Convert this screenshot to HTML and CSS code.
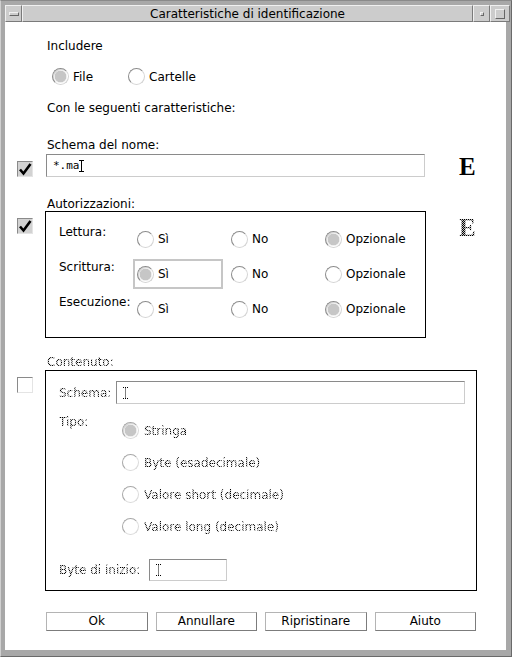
FILE: index.html
```html
<!DOCTYPE html>
<html>
<head>
<meta charset="utf-8">
<link rel="stylesheet" href="styles.css">
</head>
<body>
<div class="win">
  <div class="titlebar">
    <div class="tb-btn tb-menu"><span class="menu-bar"></span></div>
    <div class="tb-title">Caratteristiche di identificazione</div>
    <div class="tb-btn tb-min"><span class="min-sq"></span></div>
    <div class="tb-btn tb-max"><span class="max-sq"></span></div>
  </div>
  <div class="client">
    <div class="main-col">
      <div class="lbl l-includere">Includere</div>
      <div class="top-radios">
        <label class="opt"><span class="radio on"></span><span class="otext">File</span></label>
        <label class="opt opt-cartelle"><span class="radio"></span><span class="otext">Cartelle</span></label>
      </div>
      <div class="lbl l-con">Con le seguenti caratteristiche:</div>
      <div class="lbl l-schema">Schema del nome:</div>
    </div>

    <div class="row row-name">
      <div class="gut"><span class="cb checked"><svg viewBox="0 0 14 14" width="14" height="14"><path d="M2 7.5 L5.5 11.5 L12.5 2" fill="none" stroke="#000" stroke-width="2.6"/></svg></span></div>
      <div class="field f-name"><span class="ftext">*.ma</span><svg class="ibeam" viewBox="0 0 5 12" width="5" height="12"><path d="M0 0.5H5M2.5 0.5V11.5M0 11.5H5" stroke="#000" stroke-width="1" fill="none"/></svg></div>
      <div class="bigE">E</div>
    </div>

    <div class="main-col">
      <div class="lbl l-aut">Autorizzazioni:</div>
    </div>

    <div class="row row-aut">
      <div class="gut"><span class="cb checked"><svg viewBox="0 0 14 14" width="14" height="14"><path d="M2 7.5 L5.5 11.5 L12.5 2" fill="none" stroke="#000" stroke-width="2.6"/></svg></span></div>
      <div class="box box-aut">
        <div class="lbl plabel">Lettura:</div>
        <div class="cell"><span class="radio"></span><span class="otext">Sì</span></div>
        <div class="cell"><span class="radio"></span><span class="otext">No</span></div>
        <div class="cell"><span class="radio on"></span><span class="otext">Opzionale</span></div>

        <div class="lbl plabel">Scrittura:</div>
        <div class="cell focus"><span class="radio on"></span><span class="otext">Sì</span></div>
        <div class="cell"><span class="radio"></span><span class="otext">No</span></div>
        <div class="cell"><span class="radio"></span><span class="otext">Opzionale</span></div>

        <div class="lbl plabel">Esecuzione:</div>
        <div class="cell"><span class="radio"></span><span class="otext">Sì</span></div>
        <div class="cell"><span class="radio"></span><span class="otext">No</span></div>
        <div class="cell"><span class="radio on"></span><span class="otext">Opzionale</span></div>
      </div>
      <div class="bigE bigE-dis">E</div>
    </div>

    <div class="main-col">
      <div class="lbl l-cont dis">Contenuto:</div>
    </div>

    <div class="row row-cont">
      <div class="gut"><span class="cb"></span></div>
      <div class="box box-cont">
        <div class="crow">
          <div class="lbl dis c-schema">Schema:</div>
          <div class="field f-cschema"><svg class="ibeam" viewBox="0 0 5 12" width="5" height="12"><path d="M0 0.5H5M2.5 0.5V11.5M0 11.5H5" stroke="#000" stroke-width="1" stroke-dasharray="1 1" fill="none"/></svg></div>
        </div>
        <div class="tipo">
          <div class="lbl dis c-tipo">Tipo:</div>
          <div class="tipo-list">
            <div class="topt"><span class="radio on dis-radio"></span><span class="otext dis">Stringa</span></div>
            <div class="topt"><span class="radio dis-radio"></span><span class="otext dis">Byte (esadecimale)</span></div>
            <div class="topt"><span class="radio dis-radio"></span><span class="otext dis">Valore short (decimale)</span></div>
            <div class="topt"><span class="radio dis-radio"></span><span class="otext dis">Valore long (decimale)</span></div>
          </div>
        </div>
        <div class="crow crow-byte">
          <div class="lbl dis c-byte">Byte di inizio:</div>
          <div class="field f-byte"><svg class="ibeam" viewBox="0 0 5 12" width="5" height="12"><path d="M0 0.5H5M2.5 0.5V11.5M0 11.5H5" stroke="#000" stroke-width="1" stroke-dasharray="1 1" fill="none"/></svg></div>
        </div>
      </div>
    </div>

    <div class="buttons">
      <div class="btn">Ok</div>
      <div class="btn">Annullare</div>
      <div class="btn">Ripristinare</div>
      <div class="btn">Aiuto</div>
    </div>
  </div>
</div>
</body>
</html>
```

FILE: styles.css
```css
* { box-sizing: border-box; }
html, body { margin: 0; padding: 0; background: #a8a8a8; }
body {
  font-family: "DejaVu Sans", sans-serif;
  font-size: 12px;
  color: #000;
}
.win {
  width: 512px;
  height: 657px;
  background: #a8a8a8;
  border-top: 1px solid #8a8a8a;
  border-left: 1px solid #d0d0d0;
  border-right: 1px solid #6a6a6a;
  border-bottom: 1px solid #6a6a6a;
  padding: 4px 1px 6px 4px;
  display: flex;
  flex-direction: column;
}
.titlebar {
  height: 17px;
  display: flex;
  background: #cccccc;
  flex: none;
}
.tb-btn {
  flex: none;
  width: 17px;
  height: 17px;
  border: 1px solid;
  border-color: #f0f0f0 #7a7a7a #7a7a7a #f0f0f0;
  display: flex;
  align-items: center;
  justify-content: center;
  background: #cccccc;
}
.tb-max { width: 20px; }
.menu-bar {
  width: 10px; height: 4px;
  border: 1px solid;
  border-color: #f0f0f0 #666 #666 #f0f0f0;
}
.min-sq {
  width: 4px; height: 4px;
  border: 1px solid;
  border-color: #f0f0f0 #666 #666 #f0f0f0;
}
.max-sq {
  width: 10px; height: 10px;
  border: 1px solid;
  border-color: #f0f0f0 #666 #666 #f0f0f0;
}
.tb-title {
  flex: 1;
  text-align: center;
  line-height: 16px;
  border: 1px solid;
  border-color: #f0f0f0 #7a7a7a #7a7a7a #f0f0f0;
  font-size: 12px;
}
.client {
  flex: 1;
  background: #fff;
  margin-right: 4px;
  display: flex;
  flex-direction: column;
  position: relative;
}
.main-col { padding-left: 42px; display: flex; flex-direction: column; }
.lbl { line-height: 14px; white-space: nowrap; }
.l-includere { margin-top: 17px; }
.top-radios { display: flex; margin-top: 15px; height: 17px; margin-left: 5px; }
.opt { display: flex; align-items: center; }
.opt-cartelle { margin-left: 35px; }
.otext { margin-left: 4px; line-height: 14px; white-space: nowrap; }
.l-con { margin-top: 16px; }
.l-schema { margin-top: 23px; }

.row { display: flex; align-items: flex-start; }
.gut { width: 40px; flex: none; padding-left: 12px; }
.cb {
  display: flex;
  align-items: center;
  justify-content: center;
  width: 16px; height: 16px;
  border: 1px solid;
  border-color: #8a8a8a #e4e4e4 #e4e4e4 #8a8a8a;
  background: #fff;
  margin-top: 7px;
}
.cb.checked { background: #d2d2d2; }

.row-name { margin-top: 2px; }
.field {
  height: 23px;
  border: 1px solid;
  border-color: #8a8a8a #cccccc #cccccc #8a8a8a;
  display: flex;
  align-items: center;
  padding-left: 6px;
  background: #fff;
}
.f-name { width: 379px; margin-left: 1px; }
.ftext { font-family: "DejaVu Sans Mono", monospace; font-size: 11px; }
.ibeam { flex: none; }
.f-name .ibeam { margin-left: -1px; }
.bigE {
  font-family: "Liberation Serif", serif;
  font-weight: bold;
  font-size: 25px;
  line-height: 25px;
  margin-left: 34px;
}
.bigE-dis { margin-left: 33px; margin-top: 4px; }

.dis, .bigE-dis {
  color: transparent;
  background-image: repeating-conic-gradient(#000 0 25%, #c4c4c4 0 50%);
  background-size: 2px 2px;
  -webkit-background-clip: text;
  background-clip: text;
}

.l-aut { margin-top: 18px; }
.box { border: 1px solid #000; background: #fff; }
.box-aut {
  width: 381px;
  display: grid;
  grid-template-columns: 74px 94px 94px 1fr;
  grid-auto-rows: 30px;
  row-gap: 5px;
  padding: 12px 0 13px 13px;
}
.plabel { margin-top: 1px; }
.cell {
  width: 90px;
  height: 30px;
  border: 2px solid transparent;
  padding-left: 2px;
  display: flex;
  align-items: center;
}
.cell.focus { border-color: #c6c6c6; }

.radio {
  flex: none;
  width: 17px; height: 17px;
  border-radius: 50%;
  border: 1px solid;
  border-color: #8c8c8c #d4d4d4 #d4d4d4 #8c8c8c;
  background: #fff;
}
.radio.on {
  background: radial-gradient(circle, #c6c6c6 0 5.5px, #ececec 6px, #fff 7px);
  box-shadow: inset 1px 1px 0 #d8d8d8;
}
.dis-radio { border-color: #a8a8a8 #dadada #dadada #a8a8a8; }

.l-cont { margin-top: 17px; }
.row-cont { margin-top: 1px; }
.box-cont {
  width: 432px;
  height: 221px;
  padding: 10px 0 0 13px;
  display: flex;
  flex-direction: column;
}
.crow { display: flex; align-items: center; }
.c-schema { width: 57px; }
.f-cschema { width: 349px; }
.tipo { display: flex; margin-top: 11px; }
.c-tipo { width: 63px; }
.tipo-list { display: flex; flex-direction: column; gap: 15px; margin-top: 7px; }
.topt { display: flex; align-items: center; height: 17px; }
.topt .otext { margin-left: 5px; }
.crow-byte { margin-top: 24px; }
.c-byte { width: 90px; }
.f-byte { width: 78px; height: 22px; }

.buttons {
  display: grid;
  grid-template-columns: repeat(4, 1fr);
  column-gap: 8px;
  margin: 21px 0 0 41px;
  width: 430px;
}
.btn {
  height: 19px;
  border: 1px solid;
  border-color: #b4b4b4 #7c7c7c #7c7c7c #b4b4b4;
  text-align: center;
  line-height: 17px;
  background: #fff;
}
```
